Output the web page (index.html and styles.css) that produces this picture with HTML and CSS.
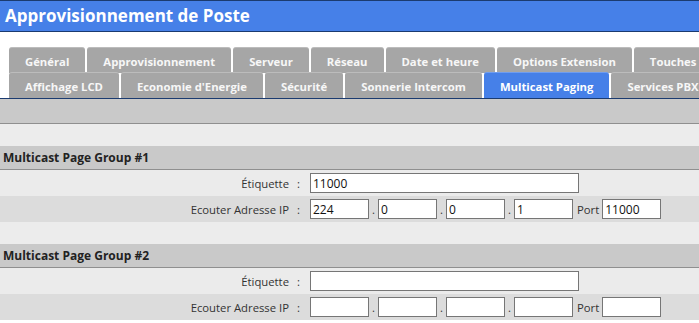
FILE: index.html
```html
<!DOCTYPE html>
<html lang="fr">
<head>
<meta charset="utf-8">
<title>Approvisionnement de Poste</title>
<link rel="stylesheet" href="styles.css">
</head>
<body>
<div class="header">Approvisionnement de Poste</div>
<div class="tabs">
  <div class="tabrow row1">
    <div class="tab">Général</div>
    <div class="tab">Approvisionnement</div>
    <div class="tab">Serveur</div>
    <div class="tab">Réseau</div>
    <div class="tab">Date et heure</div>
    <div class="tab">Options Extension</div>
    <div class="tab">Touches DSS</div>
  </div>
  <div class="tabrow row2">
    <div class="tab">Affichage LCD</div>
    <div class="tab">Economie d'Energie</div>
    <div class="tab">Sécurité</div>
    <div class="tab">Sonnerie Intercom</div>
    <div class="tab active">Multicast Paging</div>
    <div class="tab">Services PBX</div>
  </div>
</div>
<div class="band"></div>
<div class="spacer"></div>
<div class="group">
  <div class="ghead">Multicast Page Group #1</div>
  <div class="frow light">
    <div class="label">Étiquette</div><div class="colon">:</div>
    <input class="in wide" type="text" value="11000">
  </div>
  <div class="frow dark">
    <div class="label">Ecouter Adresse IP</div><div class="colon">:</div>
    <input class="in ip" type="text" value="224"><span class="dot">.</span>
    <input class="in ip" type="text" value="0"><span class="dot">.</span>
    <input class="in ip" type="text" value="0"><span class="dot">.</span>
    <input class="in ip" type="text" value="1"><span class="port">Port</span>
    <input class="in ip" type="text" value="11000">
  </div>
</div>
<div class="spacer"></div>
<div class="group">
  <div class="ghead">Multicast Page Group #2</div>
  <div class="frow light">
    <div class="label">Étiquette</div><div class="colon">:</div>
    <input class="in wide" type="text" value="">
  </div>
  <div class="frow dark">
    <div class="label">Ecouter Adresse IP</div><div class="colon">:</div>
    <input class="in ip" type="text" value=""><span class="dot">.</span>
    <input class="in ip" type="text" value=""><span class="dot">.</span>
    <input class="in ip" type="text" value=""><span class="dot">.</span>
    <input class="in ip" type="text" value=""><span class="port">Port</span>
    <input class="in ip" type="text" value="">
  </div>
</div>
</body>
</html>
```
FILE: styles.css
```css
html, body {
  margin: 0;
  padding: 0;
  background: #ffffff;
  overflow: hidden;
  font-family: "Open Sans", "Noto Sans", sans-serif;
}
.header {
  height: 30px;
  line-height: 30px;
  background: #4680e8;
  border-top: 1px solid #1b3b70;
  border-bottom: 1px solid #1b3b70;
  color: #ffffff;
  font-weight: bold;
  font-size: 17px;
  padding-left: 5px;
  white-space: nowrap;
}
.tabs {
  padding: 15px 0 0 9px;
  border-bottom: 1px solid #1b3b70;
  white-space: nowrap;
  overflow: hidden;
}
.tabrow {
  display: flex;
  gap: 2px;
}
.tabrow.row1 {
  height: 26px;
  margin-bottom: -1px;
}
.tabrow.row2 {
  height: 26px;
}
.tab {
  flex: none;
  background: #a6a6a6;
  color: #f7f7f7;
  font-weight: bold;
  font-size: 11.3px;
  padding: 1px 16px 0;
  line-height: 26px;
  border-radius: 3px 3px 0 0;
  border-top: 1px solid #bcbcbc;
}
.tab.active {
  background: #4680e8;
  border-top-color: #6f9df0;
  color: #ffffff;
}
.band {
  height: 24px;
  background: #c9c9c9;
  border-bottom: 1px solid #8f8f8f;
}
.spacer {
  height: 22px;
  background: #ececec;
}
.ghead {
  height: 23px;
  line-height: 24px;
  background: #c9c9c9;
  border-bottom: 1px solid #8f8f8f;
  font-weight: bold;
  font-size: 12px;
  color: #222;
  padding-left: 3px;
}
.frow {
  display: flex;
  align-items: center;
  height: 26px;
  font-size: 11.3px;
  color: #333;
}
.frow.light { background: #ebebeb; }
.frow.dark { background: #dcdcdc; }
.label {
  width: 289px;
  text-align: right;
}
.colon {
  width: 19px;
  text-align: center;
}
.frow .colon { margin-right: 2px; }
.in {
  box-sizing: border-box;
  height: 20px;
  border: 1px solid #767676;
  background: #fff;
  font-family: inherit;
  font-size: 12px;
  color: #111;
  padding: 0 2px;
  margin: 0;
}
.in.wide { width: 269px; }
.in.ip { width: 59px; }
.dot {
  width: 9px;
  text-align: center;
  color: #333;
}
.port {
  padding: 0 3px 0 4px;
  color: #333;
}
```
